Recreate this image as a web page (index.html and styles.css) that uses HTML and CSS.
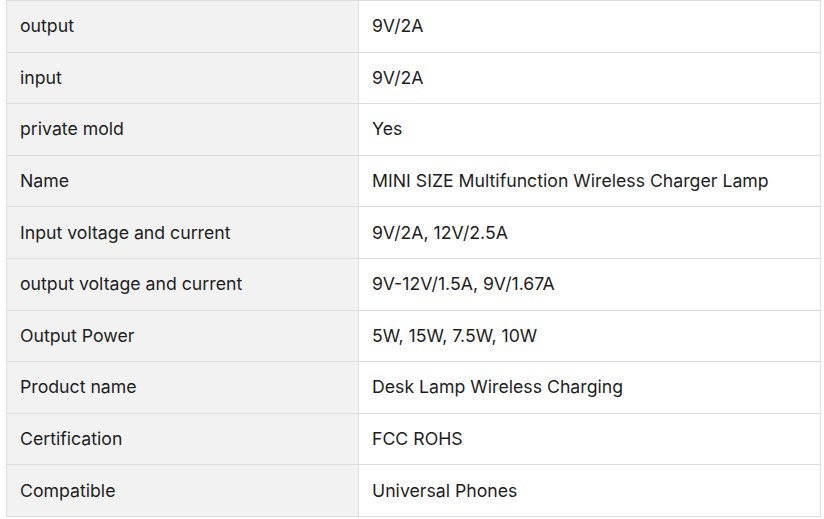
FILE: index.html
```html
<!DOCTYPE html>
<html>
<head>
<meta charset="utf-8">
<link rel="stylesheet" href="styles.css">
</head>
<body>
<table class="spec">
<tbody>
<tr><td class="k">output</td><td class="v">9V/2A</td></tr>
<tr><td class="k">input</td><td class="v">9V/2A</td></tr>
<tr><td class="k">private mold</td><td class="v">Yes</td></tr>
<tr><td class="k">Name</td><td class="v">MINI SIZE Multifunction Wireless Charger Lamp</td></tr>
<tr><td class="k">Input voltage and current</td><td class="v">9V/2A, 12V/2.5A</td></tr>
<tr><td class="k">output voltage and current</td><td class="v">9V-12V/1.5A, 9V/1.67A</td></tr>
<tr><td class="k">Output Power</td><td class="v">5W, 15W, 7.5W, 10W</td></tr>
<tr><td class="k">Product name</td><td class="v">Desk Lamp Wireless Charging</td></tr>
<tr><td class="k">Certification</td><td class="v">FCC ROHS</td></tr>
<tr><td class="k">Compatible</td><td class="v">Universal Phones</td></tr>
</tbody>
</table>
</body>
</html>
```
FILE: styles.css
```css
html, body {
  margin: 0;
  padding: 0;
  background: #fff;
}
body {
  padding: 0 3px 0 6px;
  font-family: Inter, "Noto Sans", sans-serif;
  font-size: 17.7px;
  color: #1e1e1e;
}
.spec {
  border-collapse: collapse;
  width: 815px;
  table-layout: fixed;
}
.spec td {
  border: 1px solid #ddd;
  height: 51.6px;
  padding: 0 13px;
  line-height: 26px;
  vertical-align: middle;
  box-sizing: border-box;
}
.spec .k {
  width: 352px;
  background: #f2f2f2;
}
.spec .v {
  background: #fff;
}
```
